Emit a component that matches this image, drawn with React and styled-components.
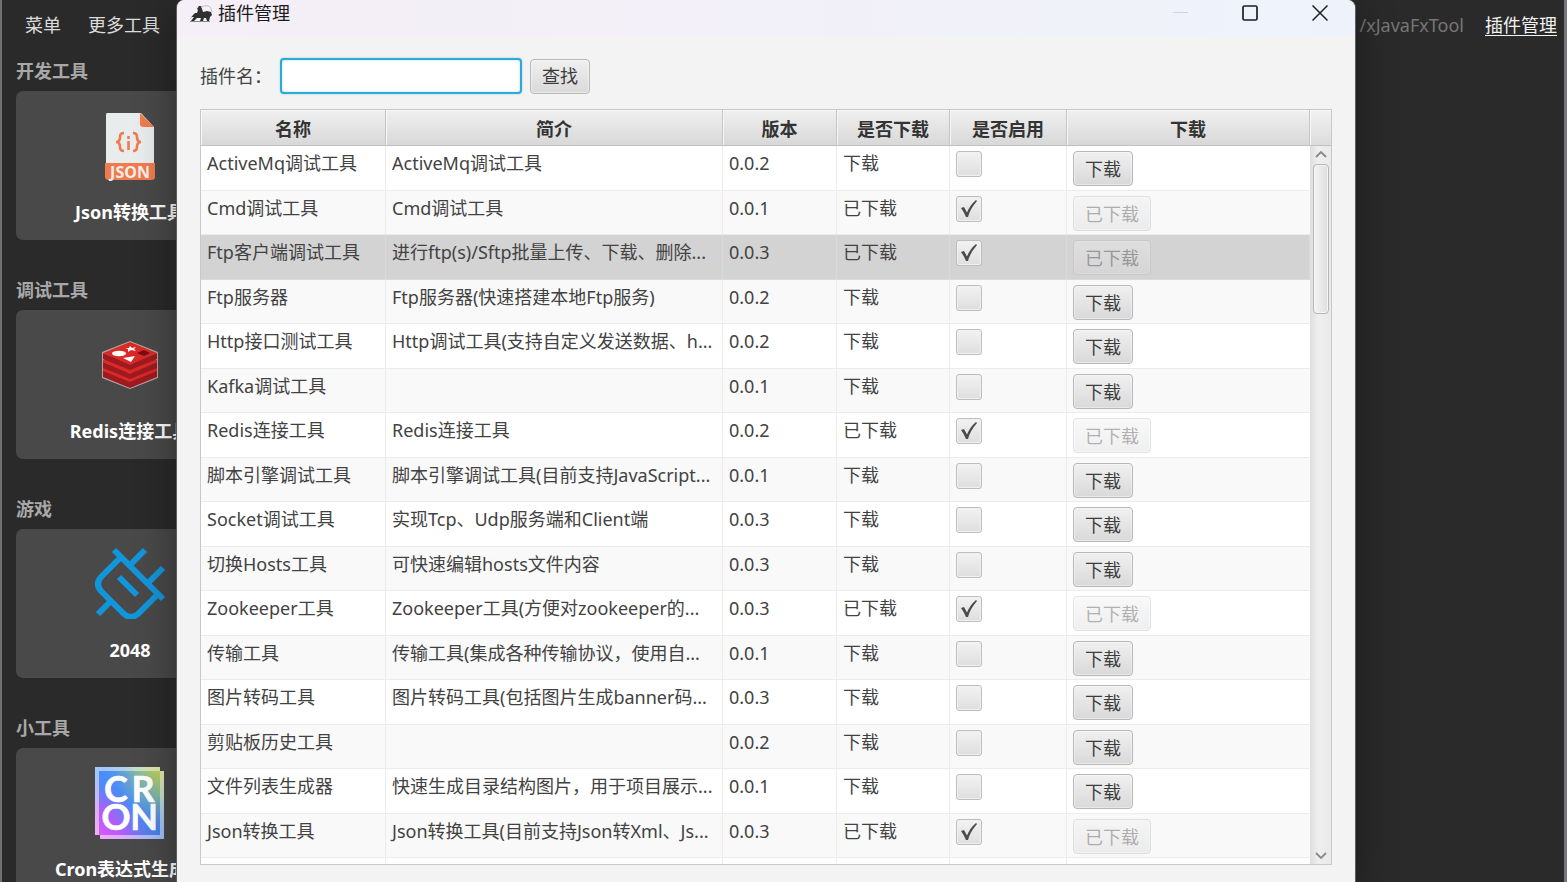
import React, { useState } from 'react';
import styled, { createGlobalStyle } from 'styled-components';

const GlobalStyle = createGlobalStyle`
    * {
        box-sizing: border-box;
    }
    body {
        margin: 0;
        background: #2a2a2a;
        overflow: hidden;
    }
    body, button, input {
        font-family: "Noto Sans", "Noto Sans CJK SC", sans-serif;
        font-size: 18px;
        line-height: 24px;
    }
`;

const MainWindow = styled.div`
    position: relative;
    height: 100vh;
    overflow: hidden;
    background: #2a2a2a;
    border-left: 2px solid #6f7070;
    border-right: 3px solid #77777b;
`;

const MenuBar = styled.header`
    display: flex;
    align-items: center;
    height: 50px;
    padding: 0 7px 0 15px;
`;

const MenuButton = styled.button`
    padding: 0;
    margin: 0 19px 0 8px;
    border: none;
    background: none;
    color: #dcdcdc;
`;

const ProjectLink = styled.a`
    margin-left: auto;
    color: #767676;
    text-decoration: none;
`;

const ManageLink = styled.a`
    margin-left: 21px;
    color: #f2f2f2;
    text-decoration: underline;
    text-underline-offset: 3px;
`;

const ToolList = styled.main`
    width: 242px;
    padding: 9px 0 0 14px;
`;

const Section = styled.section`
    margin-bottom: 38px;
`;

const SectionTitle = styled.h2`
    margin: 0;
    height: 32px;
    font-size: 18px;
    line-height: 24px;
    font-weight: 700;
    color: #a8a8a8;
`;

const ToolCard = styled.button`
    display: flex;
    flex-direction: column;
    align-items: center;
    justify-content: space-between;
    width: 228px;
    height: 149px;
    padding: 18px 0 16px;
    border: none;
    border-radius: 7px;
    background: #494949;
    color: #ffffff;
    font-weight: 700;
    white-space: nowrap;
`;

const Dialog = styled.div`
    position: absolute;
    top: 0;
    bottom: 0;
    left: 175px;
    right: 209px;
    display: flex;
    flex-direction: column;
    border-radius: 8px 8px 0 0;
    background: #f3f3f3;
    box-shadow: 0 0 0 1px #5c5c5c, 0 8px 40px rgba(0, 0, 0, 0.4);
`;

const TitleBar = styled.div`
    display: flex;
    align-items: center;
    flex: none;
    height: 36px;
    padding: 0 0 10px 12px;
    border-radius: 8px 8px 0 0;
    background: linear-gradient(90deg, #f5eff7, #f2f0f8 50%, #eef3fb);
`;

const Title = styled.h1`
    margin: 0 auto 0 5px;
    font-size: 18px;
    line-height: 24px;
    font-weight: 400;
    color: #1c1c1c;
`;

const WindowButton = styled.button`
    display: flex;
    align-items: center;
    justify-content: center;
    width: 70px;
    height: 26px;
    padding: 0;
    border: none;
    background: none;
    color: ${(props) => (props.disabled ? '#d4d3da' : '#1f1f1f')};
`;

const SearchForm = styled.form`
    display: flex;
    align-items: center;
    flex: none;
    height: 73px;
    padding: 8px 23px 1px;
    color: #444444;
`;

const SearchLabel = styled.label`
    width: 80px;
`;

const SearchInput = styled.input`
    width: 242px;
    height: 36px;
    margin-right: 8px;
    padding: 0 10px;
    border: 2px solid #2fa8d5;
    border-radius: 4px;
    background: #ffffff;
    outline: none;
    box-shadow: 0 0 2px #8fd2ec, inset 0 0 3px #b5e2f3;
`;

const FxButton = styled.button`
    height: 35px;
    padding: 0 11px;
    border: 1px solid #b8b8b8;
    border-radius: 4px;
    background: linear-gradient(#f0f0f0, #d9d9d9);
    box-shadow: inset 0 0 0 1px rgba(255, 255, 255, 0.4);
    color: #3c3c3c;
    white-space: nowrap;

    &:disabled {
        opacity: 0.4;
    }
`;

const TableFrame = styled.div`
    display: flex;
    flex: 1;
    min-height: 0;
    margin: 0 23px 17px;
    border: 1px solid #c8c8c8;
    background: #ffffff;
    overflow: hidden;
`;

const TableView = styled.div`
    flex: 1;
    overflow: hidden;
`;

const Table = styled.table`
    width: 100%;
    table-layout: fixed;
    border-collapse: separate;
    border-spacing: 0;
    color: #424242;
`;

const Column = styled.col`
    width: ${(props) => props.$width || 'auto'};
`;

const HeadCell = styled.th`
    height: 36px;
    padding: 2px 0 0;
    border-right: 1px solid #c6c6c6;
    border-bottom: 1px solid #c0c0c0;
    background: linear-gradient(#f0f0f0, #d8d8d8);
    box-shadow: inset 1px 1px 0 #f6f6f6;
    font-weight: 700;
    color: #333333;
`;

const Row = styled.tr`
    height: 45px;
    background: #ffffff;

    &:nth-child(even) {
        height: 44px;
        background: #f9f9f9;
    }
    &&[aria-selected='true'] {
        background: #d3d3d3;
    }
`;

const Cell = styled.td`
    padding: 5px 0 0 6px;
    border-right: 1px solid #ececec;
    border-bottom: 1px solid #ececec;
    vertical-align: top;
    white-space: nowrap;
    overflow: hidden;

    &:last-child {
        border-right-color: transparent;
    }
    [aria-selected='true'] > & {
        border-color: #dadada;
    }
`;

const CellContent = styled.div`
    display: flex;
    height: 35px;
    align-items: flex-start;
`;

const CheckBox = styled.input`
    appearance: none;
    width: 26px;
    height: 26px;
    margin: 0;
    border: 1px solid #bdbdbd;
    border-radius: 3px;
    background: linear-gradient(#f2f2f2, #dedede);
    box-shadow: inset 0 0 0 1px #f1f1f1;
`;

const CheckWrap = styled.span`
    display: grid;

    > * {
        grid-area: 1 / 1;
    }
    svg {
        pointer-events: none;
    }
`;

const ScrollTrack = styled.div`
    display: flex;
    flex-direction: column;
    align-items: center;
    width: 21px;
    background: linear-gradient(90deg, #dedede, #efefef 40%, #e9e9e9);
    color: #8a8a8a;
`;

const ScrollCorner = styled.div`
    flex: none;
    width: 100%;
    height: 36px;
    border-bottom: 1px solid #c0c0c0;
    background: linear-gradient(#f2f2f2, #dcdcdc);
    box-shadow: inset 1px 1px 0 #f8f8f8;
`;

const ScrollArrow = styled.button`
    display: flex;
    align-items: center;
    justify-content: center;
    flex: none;
    width: 100%;
    height: 16px;
    padding: 0;
    border: none;
    background: none;
    color: inherit;
`;

const ScrollThumb = styled.div`
    width: 16px;
    height: 150px;
    margin: 2px 0 auto;
    border: 1px solid #b6b6b6;
    border-radius: 4px;
    background: linear-gradient(90deg, #f4f4f4, #dedede);
    box-shadow: inset 0 0 0 1px #f4f4f4;
`;

const JsonIcon = () => (
    <svg width="72" height="72" viewBox="2 0 72 72" overflow="visible" aria-hidden="true">
        <path d="M15 4H49L62 18V60H14V6Q14 4 15 4Z" fill="#e8ecec" />
        <path d="M48 4L62 18H51Q48 18 48 15Z" fill="#f07b4d" />
        <path d="M13 54H63V68Q63 71 59 71H17Q13 71 13 68Z" fill="#f07b4d" />
        <g fill="none" stroke="#f07b4d" strokeWidth="2.6">
            <path d="M32 24Q28 24 28 28Q28 33 24 33Q28 33 28 38Q28 42 32 42" />
            <path d="M41 24Q45 24 45 28Q45 33 49 33Q45 33 45 38Q45 42 41 42" />
            <path d="M36.500 32V41M36.500 27V30" />
        </g>
        <text x="38" y="68.500" textAnchor="middle" fontFamily="Noto Sans" fontSize="16" fontWeight="700" fill="#f3eeec">JSON</text>
    </svg>
);

const RedisIcon = () => (
    <svg width="72" height="72" viewBox="0 0 72 72" aria-hidden="true">
        <path d="M36 13L64 24V50L36 61L8 50V24Z" fill="#b7a5a4" />
        <path d="M9 42L36 53L63 42V49L36 60L9 49Z" fill="#9d1a20" />
        <path d="M9 40L36 29L63 40V43L36 54L9 43Z" fill="#d92a26" />
        <path d="M9 34L36 45L63 34V40L36 51L9 40Z" fill="#9d1a20" />
        <path d="M9 32L36 21L63 32V34L36 46L9 34Z" fill="#d92a26" />
        <path d="M9 25L36 36L63 25V31L36 42L9 31Z" fill="#9d1a20" />
        <path d="M36 14L63 25L36 37L9 25Z" fill="#d92a26" />
        <ellipse cx="25" cy="25.500" rx="7" ry="2.700" fill="#fff" />
        <path d="M36 18L38 20L42 19L40 21L42 23L37 22L34 24V21L31 20L35 20ZM29 30L41 28L37 34Z" fill="#fff" />
        <path d="M43 25L50 22L56 25L50 28Z" fill="#7a0c10" />
    </svg>
);

const PlugIcon = () => (
    <svg width="72" height="72" viewBox="0 0 72 72" aria-hidden="true">
        <g fill="none" stroke="#1296db" strokeWidth="6">
            <path d="M20 3L69 52" />
            <path d="M51 3L36 18M69 21L54 36M4 67L17 54" />
            <path d="M27 10L8 29Q0 37 8 45L29 66Q37 74 45 66L62 49" />
            <path d="M25 30L43 48" />
        </g>
    </svg>
);

const CronIcon = () => (
    <svg width="72" height="74" viewBox="0 0 72 74" aria-hidden="true">
        <defs>
            <linearGradient id="cronBase" x1="0" y1="1" x2="1" y2="0">
                <stop offset="0" stopColor="#e35cf8" />
                <stop offset="0.25" stopColor="#b15cfa" />
                <stop offset="0.5" stopColor="#4a8cf5" />
                <stop offset="0.72" stopColor="#79b3b0" />
                <stop offset="1" stopColor="#d6e03e" />
            </linearGradient>
            <radialGradient id="cronBlue" cx="0" cy="0" r="0.6">
                <stop offset="0" stopColor="#4a8cff" />
                <stop offset="1" stopColor="#4a8cff" stopOpacity="0" />
            </radialGradient>
            <radialGradient id="cronCorner" cx="1" cy="1" r="0.6">
                <stop offset="0" stopColor="#4a80e8" />
                <stop offset="1" stopColor="#4a80e8" stopOpacity="0" />
            </radialGradient>
        </defs>
        <path d="M1 1H66V5H70V73H6V69H1Z" fill="url(#cronBase)" />
        <path d="M1 1H66V5H70V73H6V69H1Z" fill="url(#cronBlue)" />
        <path d="M1 1H66V5H70V73H6V69H1Z" fill="url(#cronCorner)" />
        <path d="M1 1H66V5H70V73H6V69H1ZM5 5V69H66V5Z" fill="#fff" fillRule="evenodd" opacity="0.5" />
        <g fontFamily="Lato" fontSize="36" fontWeight="700" fill="#fff" stroke="#fff" strokeWidth="0.6" textAnchor="middle">
            <text x="22" y="36">C</text>
            <text x="49" y="36">R</text>
            <text x="22" y="64">O</text>
            <text x="50" y="64">N</text>
        </g>
    </svg>
);

const AppIcon = () => (
    <svg width="24" height="20" viewBox="0 0 24 20" aria-hidden="true">
        <path d="M1 16L4 12L6 10L8 10L9 7L8 6L10 3L12 3L13 6L14 9L18 8L22 9L23 12L21 14L20 18H18L17 15L15 15L14 18H11L12 15L8 15L5 18H2L5 14L3 14Z" fill="#303030" />
        <path d="M12 4Q19 1 22 5L23 9" fill="none" stroke="#c4c0c8" />
        <path d="M1 18.500H21" stroke="#8b888e" />
    </svg>
);

const MinimizeIcon = () => (
    <svg width="16" height="16" viewBox="0 0 16 16"><path d="M1 7.500H16" stroke="currentColor" /></svg>
);

const MaximizeIcon = () => (
    <svg width="16" height="16" viewBox="0 0 16 16">
        <rect x="1" y="1" width="14" height="14" rx="1.500" fill="none" stroke="currentColor" strokeWidth="1.700" />
    </svg>
);

const CloseIcon = () => (
    <svg width="16" height="16" viewBox="0 0 16 16">
        <path d="M0.500 0.500L15.500 15.500M15.500 0.500L0.500 15.500" stroke="currentColor" strokeWidth="1.500" />
    </svg>
);

const CheckMark = () => (
    <svg width="26" height="26" viewBox="0 0 26 26" aria-hidden="true">
        <path d="M5 12L8 11L11 16.500Q14 9 20 4L21 5Q14 13 12 21H10Q8 16 5 12Z" fill="#4b4b4b" />
    </svg>
);

const Chevron = ({ d }) => (
    <svg width="12" height="8" viewBox="0 0 12 8"><path d={d} fill="none" stroke="currentColor" strokeWidth="1.800" /></svg>
);

const sections = [
    { title: '开发工具', tool: 'Json转换工具', Icon: JsonIcon },
    { title: '调试工具', tool: 'Redis连接工具', Icon: RedisIcon },
    { title: '游戏', tool: '2048', Icon: PlugIcon },
    { title: '小工具', tool: 'Cron表达式生成器', Icon: CronIcon },
];

const plugins = [
    { name: 'ActiveMq调试工具', intro: 'ActiveMq调试工具', version: '0.0.2' },
    { name: 'Cmd调试工具', intro: 'Cmd调试工具', version: '0.0.1', downloaded: true },
    { name: 'Ftp客户端调试工具', intro: '进行ftp(s)/Sftp批量上传、下载、删除...', version: '0.0.3', downloaded: true },
    { name: 'Ftp服务器', intro: 'Ftp服务器(快速搭建本地Ftp服务)', version: '0.0.2' },
    { name: 'Http接口测试工具', intro: 'Http调试工具(支持自定义发送数据、h...', version: '0.0.2' },
    { name: 'Kafka调试工具', intro: '', version: '0.0.1' },
    { name: 'Redis连接工具', intro: 'Redis连接工具', version: '0.0.2', downloaded: true },
    { name: '脚本引擎调试工具', intro: '脚本引擎调试工具(目前支持JavaScript...', version: '0.0.1' },
    { name: 'Socket调试工具', intro: '实现Tcp、Udp服务端和Client端', version: '0.0.3' },
    { name: '切换Hosts工具', intro: '可快速编辑hosts文件内容', version: '0.0.3' },
    { name: 'Zookeeper工具', intro: 'Zookeeper工具(方便对zookeeper的...', version: '0.0.3', downloaded: true },
    { name: '传输工具', intro: '传输工具(集成各种传输协议，使用自...', version: '0.0.1' },
    { name: '图片转码工具', intro: '图片转码工具(包括图片生成banner码...', version: '0.0.3' },
    { name: '剪贴板历史工具', intro: '', version: '0.0.2' },
    { name: '文件列表生成器', intro: '快速生成目录结构图片，用于项目展示...', version: '0.0.1' },
    { name: 'Json转换工具', intro: 'Json转换工具(目前支持Json转Xml、Js...', version: '0.0.3', downloaded: true },
];

const PluginRow = ({ plugin, selected, onSelect }) => {
    const [enabled, setEnabled] = useState(Boolean(plugin.downloaded));
    const status = plugin.downloaded ? '已下载' : '下载';

    return (
        <Row aria-selected={selected} onClick={onSelect}>
            <Cell>{plugin.name}</Cell>
            <Cell>{plugin.intro}</Cell>
            <Cell>{plugin.version}</Cell>
            <Cell>{status}</Cell>
            <Cell>
                <CellContent>
                    <CheckWrap>
                        <CheckBox
                            type="checkbox"
                            aria-label={`启用 ${plugin.name}`}
                            checked={enabled}
                            onChange={() => setEnabled((state) => !state)}
                        />
                        {enabled && <CheckMark />}
                    </CheckWrap>
                </CellContent>
            </Cell>
            <Cell>
                <CellContent>
                    <FxButton type="button" disabled={plugin.downloaded}>{status}</FxButton>
                </CellContent>
            </Cell>
        </Row>
    );
};

const PluginDialog = () => {
    const [keyword, setKeyword] = useState('');
    const [selected, setSelected] = useState(2);

    return (
        <Dialog role="dialog" aria-labelledby="dialogTitle">
            <TitleBar>
                <AppIcon />
                <Title id="dialogTitle">插件管理</Title>
                <WindowButton aria-label="最小化" disabled><MinimizeIcon /></WindowButton>
                <WindowButton aria-label="最大化"><MaximizeIcon /></WindowButton>
                <WindowButton aria-label="关闭"><CloseIcon /></WindowButton>
            </TitleBar>
            <SearchForm onSubmit={(e) => e.preventDefault()}>
                <SearchLabel htmlFor="pluginName">插件名：</SearchLabel>
                <SearchInput id="pluginName" type="text" value={keyword} onChange={(e) => setKeyword(e.target.value)} />
                <FxButton type="submit">查找</FxButton>
            </SearchForm>
            <TableFrame>
                <TableView>
                    <Table>
                        <colgroup>
                            <Column $width="185px" />
                            <Column $width="337px" />
                            <Column $width="114px" />
                            <Column $width="113px" />
                            <Column $width="117px" />
                            <Column />
                        </colgroup>
                        <thead>
                            <tr>
                                <HeadCell>名称</HeadCell>
                                <HeadCell>简介</HeadCell>
                                <HeadCell>版本</HeadCell>
                                <HeadCell>是否下载</HeadCell>
                                <HeadCell>是否启用</HeadCell>
                                <HeadCell>下载</HeadCell>
                            </tr>
                        </thead>
                        <tbody>
                            {plugins.map((plugin, i) => (
                                <PluginRow
                                    key={plugin.name}
                                    plugin={plugin}
                                    selected={i === selected}
                                    onSelect={() => setSelected(i)}
                                />
                            ))}
                            <Row aria-hidden="true">
                                <Cell /><Cell /><Cell /><Cell /><Cell /><Cell />
                            </Row>
                        </tbody>
                    </Table>
                </TableView>
                <ScrollTrack>
                    <ScrollCorner />
                    <ScrollArrow aria-label="向上滚动"><Chevron d="M1 7L6 2L11 7" /></ScrollArrow>
                    <ScrollThumb />
                    <ScrollArrow aria-label="向下滚动"><Chevron d="M1 1L6 6L11 1" /></ScrollArrow>
                </ScrollTrack>
            </TableFrame>
        </Dialog>
    );
};

const App = () => (
    <MainWindow>
        <GlobalStyle />
        <MenuBar>
            <MenuButton>菜单</MenuButton>
            <MenuButton>更多工具</MenuButton>
            <ProjectLink href="#project">/xJavaFxTool</ProjectLink>
            <ManageLink href="#plugins">插件管理</ManageLink>
        </MenuBar>
        <ToolList>
            {sections.map(({ title, tool, Icon }) => (
                <Section key={title}>
                    <SectionTitle>{title}</SectionTitle>
                    <ToolCard>
                        <Icon />
                        {tool}
                    </ToolCard>
                </Section>
            ))}
        </ToolList>
        <PluginDialog />
    </MainWindow>
);

export default App;
